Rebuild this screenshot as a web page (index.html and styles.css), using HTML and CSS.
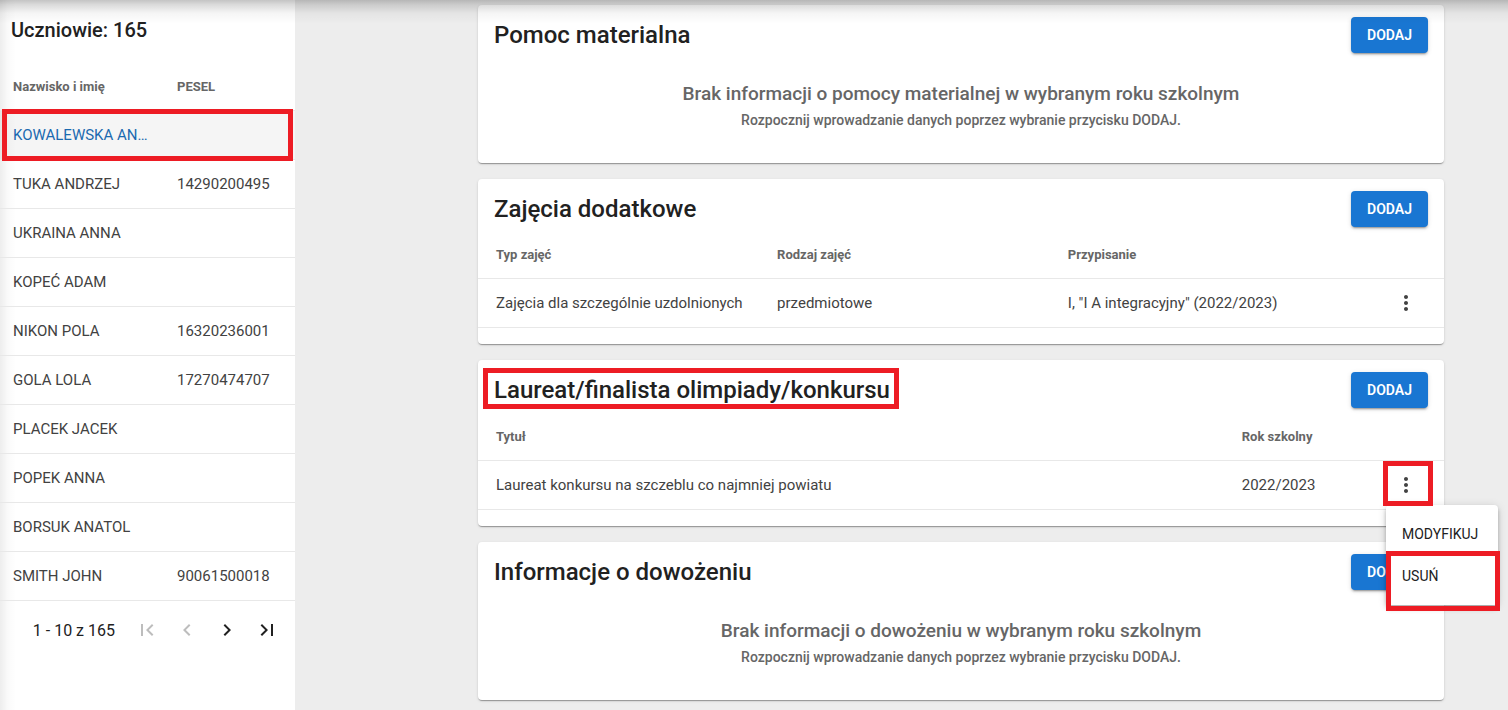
FILE: index.html
```html
<!DOCTYPE html>
<html lang="pl">
<head>
<meta charset="utf-8">
<title>Uczniowie</title>
<link rel="stylesheet" href="styles.css">
</head>
<body>
<div class="app">
  <aside class="sidebar">
    <h1 class="sidebar-title">Uczniowie: 165</h1>
    <table class="table students">
      <thead><tr><th class="col-name">Nazwisko i imię</th><th>PESEL</th></tr></thead>
      <tbody>
        <tr class="selected"><td><a class="student-link" href="#kowalewska">KOWALEWSKA AN…</a></td><td></td></tr>
        <tr><td>TUKA ANDRZEJ</td><td>14290200495</td></tr>
        <tr><td>UKRAINA ANNA</td><td></td></tr>
        <tr><td>KOPEĆ ADAM</td><td></td></tr>
        <tr><td>NIKON POLA</td><td>16320236001</td></tr>
        <tr><td>GOLA LOLA</td><td>17270474707</td></tr>
        <tr><td>PLACEK JACEK</td><td></td></tr>
        <tr><td>POPEK ANNA</td><td></td></tr>
        <tr><td>BORSUK ANATOL</td><td></td></tr>
        <tr><td>SMITH JOHN</td><td>90061500018</td></tr>
      </tbody>
    </table>
    <nav class="pager" aria-label="Stronicowanie">
      <span class="pager-range">1 - 10 z 165</span>
      <button class="icon-button" type="button" disabled aria-label="Pierwsza strona"><svg class="icon" viewBox="0 0 24 24"><path d="M18.41 16.59L13.82 12l4.59-4.59L17 6l-6 6 6 6zM6 6h2v12H6z"/></svg></button>
      <button class="icon-button" type="button" disabled aria-label="Poprzednia strona"><svg class="icon" viewBox="0 0 24 24"><path d="M15.41 7.41L14 6l-6 6 6 6 1.41-1.41L10.83 12z"/></svg></button>
      <button class="icon-button" type="button" aria-label="Następna strona"><svg class="icon" viewBox="0 0 24 24"><path d="M10 6L8.59 7.41 13.17 12l-4.58 4.59L10 18l6-6z"/></svg></button>
      <button class="icon-button" type="button" aria-label="Ostatnia strona"><svg class="icon" viewBox="0 0 24 24"><path d="M5.59 7.41L10.18 12l-4.59 4.59L7 18l6-6-6-6zM16 6h2v12h-2z"/></svg></button>
    </nav>
  </aside>

  <main class="content">
    <section class="card">
      <header class="card-head"><h2 class="card-title">Pomoc materialna</h2><button class="add-button" type="button">DODAJ</button></header>
      <div class="empty">
        <p class="empty-title">Brak informacji o pomocy materialnej w wybranym roku szkolnym</p>
        <p class="empty-hint">Rozpocznij wprowadzanie danych poprzez wybranie przycisku DODAJ.</p>
      </div>
    </section>

    <section class="card">
      <header class="card-head"><h2 class="card-title">Zajęcia dodatkowe</h2><button class="add-button" type="button">DODAJ</button></header>
      <table class="table records">
        <thead><tr><th class="col-type">Typ zajęć</th><th class="col-kind">Rodzaj zajęć</th><th>Przypisanie</th><th class="col-action"></th></tr></thead>
        <tbody><tr>
          <td>Zajęcia dla szczególnie uzdolnionych</td><td>przedmiotowe</td><td>I, "I A integracyjny" (2022/2023)</td>
          <td class="action"><button class="icon-button more" type="button" aria-label="Więcej"><svg class="icon" viewBox="0 0 24 24"><path d="M12 8c1.100 0 2-.9 2-2s-.9-2-2-2-2 .9-2 2 .9 2 2 2zm0 2c-1.100 0-2 .9-2 2s.9 2 2 2 2-.9 2-2-.9-2-2-2zm0 6c-1.100 0-2 .9-2 2s.9 2 2 2 2-.9 2-2-.9-2-2-2z"/></svg></button></td>
        </tr></tbody>
      </table>
      <div class="card-foot"></div>
    </section>

    <section class="card">
      <header class="card-head card-head-marked"><h2 class="card-title marked-title">Laureat/finalista olimpiady/konkursu</h2><button class="add-button" type="button">DODAJ</button></header>
      <table class="table records">
        <thead><tr><th class="col-award">Tytuł</th><th>Rok szkolny</th><th class="col-action"></th></tr></thead>
        <tbody><tr>
          <td>Laureat konkursu na szczeblu co najmniej powiatu</td><td>2022/2023</td>
          <td class="action action-open"><button class="icon-button more" type="button" aria-label="Więcej" aria-expanded="true"><svg class="icon" viewBox="0 0 24 24"><path d="M12 8c1.100 0 2-.9 2-2s-.9-2-2-2-2 .9-2 2 .9 2 2 2zm0 2c-1.100 0-2 .9-2 2s.9 2 2 2 2-.9 2-2-.9-2-2-2zm0 6c-1.100 0-2 .9-2 2s.9 2 2 2 2-.9 2-2-.9-2-2-2z"/></svg></button>
            <div class="menu" role="menu">
              <button class="menu-item" type="button" role="menuitem">MODYFIKUJ</button>
              <button class="menu-item menu-item-marked" type="button" role="menuitem">USUŃ</button>
            </div>
          </td>
        </tr></tbody>
      </table>
      <div class="card-foot"></div>
    </section>

    <section class="card">
      <header class="card-head"><h2 class="card-title">Informacje o dowożeniu</h2><button class="add-button" type="button">DODAJ</button></header>
      <div class="empty">
        <p class="empty-title">Brak informacji o dowożeniu w wybranym roku szkolnym</p>
        <p class="empty-hint">Rozpocznij wprowadzanie danych poprzez wybranie przycisku DODAJ.</p>
      </div>
    </section>
  </main>
</div>
</body>
</html>
```
FILE: styles.css
```css
* { box-sizing: border-box; }

body {
  margin: 0;
  background: #ededed;
  color: #212121;
  font-family: Roboto, "Liberation Sans", sans-serif;
  font-size: 15px;
}

/* shadow cast by the toolbar above the page */
body::before {
  content: "";
  position: absolute;
  inset: 0 0 auto;
  height: 24px;
  background: linear-gradient(rgba(0, 0, 0, .23), rgba(0, 0, 0, .14) 20%, rgba(0, 0, 0, .04) 55%, transparent);
  pointer-events: none;
  z-index: 5;
}

button {
  border: 0;
  font: inherit;
  cursor: pointer;
}

.app {
  display: flex;
  min-height: 100vh;
}

/* student list */
.sidebar {
  flex: 0 0 295px;
  background: linear-gradient(to right, rgba(0, 0, 0, .07), rgba(0, 0, 0, .02) 8px, transparent 16px) #fff;
}

.sidebar-title {
  margin: 0;
  padding: 18px 11px 20px;
  font-size: 20px;
  line-height: 24px;
  font-weight: 500;
}

.table {
  width: 100%;
  border-collapse: separate;
  border-spacing: 0;
  table-layout: fixed;
}

.table th,
.table td {
  height: 49px;
  border-bottom: 1px solid #e8e8e8;
  text-align: left;
  white-space: nowrap;
}

.table th {
  color: #666;
  font-size: 13px;
  font-weight: 700;
}

.table td { color: #424242; }

.students th,
.students td { padding: 0 13px; }

.col-name { width: 164px; }

.students .selected { position: relative; }

.selected td { background: rgba(0, 0, 0, .04); }

.selected td:first-child::after {
  content: "";
  position: absolute;
  inset: -2px 2px -1px;
  border: 5px solid #ed1c24;
}

.student-link {
  color: #1b6ab0;
  text-decoration: none;
}

.pager {
  display: flex;
  align-items: center;
  justify-content: flex-end;
  padding: 9px 8px;
  font-size: 16px;
}

.pager-range { margin-right: 12px; }

.icon-button {
  display: inline-flex;
  justify-content: center;
  width: 40px;
  padding: 8px 0;
  background: none;
  color: #212121;
}

.icon-button:disabled { color: #bdbdbd; }

.icon {
  width: 24px;
  height: 24px;
  fill: currentColor;
}

/* cards */
.content {
  flex: 1;
  display: flex;
  flex-direction: column;
  gap: 16px;
  padding: 5px 64px 10px 183px;
}

.card {
  background: #fff;
  border-radius: 4px;
  box-shadow: 0 2px 1px -1px rgba(0, 0, 0, .2), 0 1px 1px rgba(0, 0, 0, .14), 0 1px 3px rgba(0, 0, 0, .12);
}

.card-head {
  display: flex;
  align-items: center;
  justify-content: space-between;
  padding: 12px 16px 3px;
}

.card-head-marked { padding-bottom: 4px; }

.card-title {
  margin: 0;
  font-size: 24px;
  line-height: 32px;
  font-weight: 500;
}

.marked-title { position: relative; }

.marked-title::after {
  content: "";
  position: absolute;
  inset: -6px -9px -3px -11px;
  border: 5px solid #ed1c24;
}

.add-button {
  padding: 6px 16px;
  border-radius: 4px;
  background: #1976d2;
  color: #fff;
  font-size: 14px;
  line-height: 24px;
  font-weight: 600;
  box-shadow: 0 3px 1px -2px rgba(0, 0, 0, .2), 0 2px 2px rgba(0, 0, 0, .14), 0 1px 5px rgba(0, 0, 0, .12);
}

.empty {
  padding: 22px 16px 32px;
  color: #666;
  font-weight: 500;
  text-align: center;
}

.empty p { margin: 0; }

.empty-title {
  font-size: 19px;
  line-height: 32px;
}

.empty-hint {
  font-size: 14px;
  line-height: 21px;
}

.records th,
.records td { padding: 0 18px; }

.col-type { width: 29.1%; }
.col-kind { width: 30.1%; }
.col-award { width: 77.2%; }

.records .col-action { width: 76px; }

.records .action {
  padding: 0;
  text-align: center;
}

.more {
  vertical-align: middle;
  color: #424242;
}

.card-foot { height: 16px; }

/* row menu */
.records .action-open { position: relative; }

.action-open::after {
  content: "";
  position: absolute;
  inset: 0 11px 3px 15px;
  border: 5px solid #ed1c24;
  z-index: 3;
  pointer-events: none;
}

.menu {
  position: absolute;
  top: 44px;
  left: 18px;
  width: 112px;
  padding: 8px 0;
  border-radius: 4px;
  background: #fff;
  box-shadow: 0 2px 4px -1px rgba(0, 0, 0, .2), 0 4px 5px rgba(0, 0, 0, .14), 0 1px 10px rgba(0, 0, 0, .12);
  z-index: 2;
}

.menu-item {
  display: block;
  position: relative;
  width: 100%;
  padding: 9px 16px;
  background: none;
  color: #212121;
  font-size: 14px;
  line-height: 24px;
  text-align: left;
}

.menu-item-marked::after {
  content: "";
  position: absolute;
  inset: -4px -2px -14px 0;
  border: 5px solid #ed1c24;
}
```
